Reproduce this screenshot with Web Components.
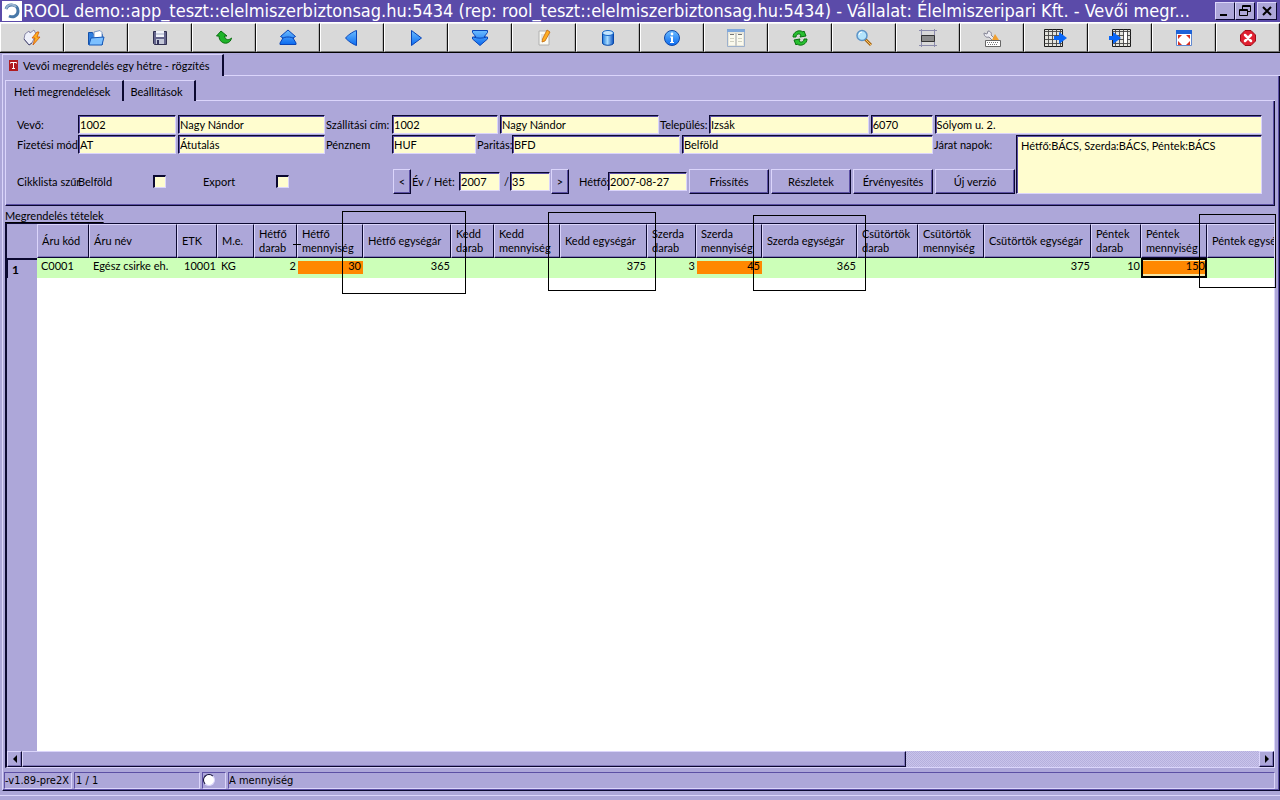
<!DOCTYPE html>
<html lang="hu">
<head>
<meta charset="utf-8">
<title>ROOL</title>
<style>
:root{
  --face:#ada7d9; --light:#dbd5fb; --dark:#0b0830; --mid:#5c50a4; --soft:#7f76b8; --paper:#fffdcf;
  --ui:Lato,Roboto,"Liberation Sans",Arial,sans-serif;
}
html,body{height:100%;margin:0}
body{background:var(--face);font:11px/13px var(--ui);color:#000;overflow:hidden}
</style>
</head>
<body>
<rool-app></rool-app>
<script>
const esc = s => s.replace(/&/g,'&amp;').replace(/</g,'&lt;').replace(/"/g,'&quot;');

function define(name, css, html) {
  customElements.define(name, class extends HTMLElement {
    connectedCallback() {
      if (this.shadowRoot) return;
      this.attachShadow({mode:'open'}).innerHTML =
        '<style>*{box-sizing:border-box}' + css + '</style>' + (typeof html === 'function' ? html(this) : html);
    }
  });
}

const defs = `<defs>
<linearGradient id="b" x1="0" y1="0" x2="0" y2="1"><stop offset="0" stop-color="#6cbcff"/><stop offset="1" stop-color="#0a6af0"/></linearGradient>
<linearGradient id="c" x1="0" y1="0" x2="1" y2="0"><stop offset="0" stop-color="#1d78dc"/><stop offset=".45" stop-color="#a8dcff"/><stop offset="1" stop-color="#0a50c0"/></linearGradient></defs>`;
const tableGlyph = (x) => `<g fill="none" stroke="#1b1b1b"><path fill="#e4e4de" d="M${x}.5 -.5h18v17h-18z"/><path d="M${x}.5 1.500h18M${x}.5 5.500h18M${x}.5 9.500h18M${x}.5 13.500h18M${x+3}.5 -.5v17M${x+7}.5 -.5v17M${x+11}.5 -.5v17M${x+15}.5 -.5v17" stroke="#444" stroke-width=".9"/></g>`;
const icons = {
  run:['Futtatás',`<path d="M1 4l4-3 1 2 4-3 2 4-4 9-3 2-5-6z" fill="#eef0fa" stroke="#8888a8"/><path d="M0 9l5 6 3-2" fill="none" stroke="#505078"/><path d="M13 2l-5 6h3l-2 7 7-8h-3l2-5z" fill="#ffb020" stroke="#d05808" stroke-width=".8"/>`],
  open:['Megnyitás',`<path d="M.5 2.500h4l1 2h9v10H.5z" fill="#2f7fe0" stroke="#1450a8"/><path d="M6 2l6-1.500 2 2V8H6z" fill="#fff" stroke="#7898c8"/><path d="M3 8l13-1-2 8H1z" fill="#7cc0ff" stroke="#1558b8"/>`],
  save:['Mentés',`<path d="M1.500 1.500h13v13h-12l-1-1z" fill="#65658c" stroke="#303050"/><path d="M4 1h8v6H4z" fill="#f2f4fa"/><path d="M4 9h8v5H4z" fill="#c4c8d8"/><path d="M5 10h2v4H5z" fill="#34345c"/><path d="M4 4h8" stroke="#a0a8c0"/>`],
  undo:['Vissza',`<path d="M5 1L.5 6h2.500c0 5 4 8 8 7 2-.5 4-2 4.500-5-2 2-6 3-7-2h2.500z" fill="#1fb42a" stroke="#08700f"/>`],
  first:['Első',`<path d="M8 0l7.500 6.500-2.500 1.500 3 5v1.500H0V13l3-5L.5 6.500z" fill="url(#b)" stroke="#0845b8"/><path d="M2 8.500c3-2 9-2 12 0" fill="none" stroke="#0845b8"/>`],
  prev:['Előző',`<path d="M12.500 .5v15C8 14 3 10 1.500 8 3 6 8 2 12.500 .5z" fill="url(#b)" stroke="#0845b8" stroke-linejoin="round"/>`],
  next:['Következő',`<path d="M3.500 .5v15L13.500 8z" fill="url(#b)" stroke="#0845b8" stroke-linejoin="round"/>`],
  last:['Utolsó',`<path d="M.5 .5h15v2L12 7h3.500v2L8 15.500.5 9V7H4L.5 2.500z" fill="url(#b)" stroke="#0845b8"/><path d="M2 7c3 1.500 9 1.500 12 0" fill="none" stroke="#0845b8"/>`],
  edit:['Szerkesztés',`<path d="M3 1h10v14H3z" fill="#fbfbf4" stroke="#b0b0b0"/><path d="M5 5h5M5 7h4M5 9h4" stroke="#ccc"/><path d="M11 0l3 2-5 9-3 1 .5-3z" fill="#ffae20" stroke="#c06810" stroke-width=".8"/>`],
  data:['Adatbázis',`<path d="M2.500 3v10c0 3 11 3 11 0V3z" fill="url(#c)" stroke="#0848a8"/><ellipse cx="8" cy="3" rx="5.500" ry="2.500" fill="#c4e6ff" stroke="#1768c8"/>`],
  info:['Információ',`<circle cx="8" cy="8" r="7.500" fill="url(#b)" stroke="#1048a8"/><circle cx="8" cy="4" r="1.400" fill="#fff"/><path d="M6 6.500h3V12h1v1H6v-1h1V7.500H6z" fill="#fff"/>`],
  list:['Lista',`<path d="M-.5 -.5h17v17h-17z" fill="#e8e6da" stroke="#9cb0cc"/><path d="M-1 -1h18v3H-1z" fill="#7fa8dc"/><path d="M1 4h6v11H1zM9 4h6v11H9z" fill="#fbfaee"/><path d="M2 4.500h4M10 4.500h4" stroke="#777"/><path d="M2 8.500h4M10 8.500h4M2 11.500h4M10 11.500h4" stroke="#d0d0c0"/><path d="M8 3v13" stroke="#b0b4b8"/>`],
  sync:['Frissítés',`<path d="M1 7c0-5 6-8 10-5l1-1 2 5-6 1 1-2C7 3 4 4 4 7z" fill="#28c030" stroke="#087010"/><path d="M15 9c0 5-6 8-10 5l-1 1-2-5 6-1-1 2c2 2 5 1 5-2z" fill="#28c030" stroke="#087010"/>`],
  find:['Keresés',`<path d="M9 9l6 6" stroke="#a86818" stroke-width="3"/><path d="M10 10l5 5" stroke="#ffc860"/><circle cx="6" cy="5.500" r="5" fill="#b4e4fc" stroke="#5c94c8" stroke-width="1.500"/><path d="M3 5a3 3 0 013-3" stroke="#fff" fill="none"/>`],
  frame:['Keret',`<path d="M1.500 -1v18M14.500 -1v18M-1 .5h18M-1 15.500h18" stroke="#8c8cac"/><path d="M1.500 5.500h13v6h-13z" fill="#8c8c8c" stroke="#333"/>`],
  tools:['Eszközök',`<path d="M0 3l3 1 1-3c3 0 4 3 3 4l5 5-2 2-5-5C2 8 0 6 0 3z" fill="#ececf2" stroke="#888898"/><path d="M11 4l-3 6h7z" fill="#f0a030"/><path d="M1.500 10.500h15v6h-15z" fill="#fff" stroke="#666"/><path d="M3 12.500h12M4 14.500h10" stroke="#777" stroke-dasharray="1 1"/>`],
  exp:['Exportálás',tableGlyph(-3)+`<path d="M6 6h5V2l8 6-8 6v-4H6z" fill="#0866f8"/>`],
  imp:['Importálás',tableGlyph(0)+`<path d="M12 2h3v11h-3z" fill="#fff"/><path d="M-3 6h4V2l8 6-8 6v-4h-4z" fill="#0866f8"/>`],
  full:['Teljes képernyő',`<path d="M.5 .5h15v15H.5z" fill="#fff" stroke="#6088d0"/><path d="M0 0h16v4H0z" fill="#1c62d8"/><path d="M2 5h4L2 9zM14 5v4l-4-4zM2 15v-4l4 4zM14 15h-4l4-4z" fill="#d83020"/>`],
  quit:['Kilépés',`<path d="M5 .5h6L15.500 5v6L11 15.500H5L.5 11V5z" fill="#e02030" stroke="#a00c18"/><path d="M5 5l6 6M11 5l-6 6" stroke="#fff" stroke-width="2.500" stroke-linecap="round"/>`]
};

define('rool-titlebar', `
:host{display:flex;align-items:center;height:22px;padding:0 3px 0 2px;background:#5b4ba9;color:#fff;
 font:18px/22px "DejaVu Sans Condensed","DejaVu Sans",sans-serif}
svg{display:block;flex:none}
.logo{background:#fff;width:20px;height:20px}
h1{flex:1;min-width:0;margin:0 0 0 1px;font:inherit;white-space:nowrap;overflow:hidden}
button{flex:none;width:20px;height:18px;padding:0;background:var(--face);border:1px solid;border-color:var(--light) var(--dark) var(--dark) var(--light);display:grid;place-items:center}
button:last-child{margin-left:2px}`, `
<svg class="logo" viewBox="0 0 20 20"><path d="M4 8c2-6 12-5 12 2 0 5-5 7-9 5" fill="none" stroke="#4878a8" stroke-width="3"/><path d="M4 8c2-6 8-5 10-2" fill="none" stroke="#9ab4d0" stroke-width="2"/></svg>
<h1><slot></slot></h1>
<button aria-label="Kis méret"><svg width="12" height="12"><path d="M1 10h7" stroke="#000" stroke-width="2"/></svg></button>
<button aria-label="Visszaállítás"><svg width="12" height="12" fill="none" stroke="#000"><path d="M3.500 4V.5h8v6H9M3 1.500h9M.5 4.500h8v6h-8zM0 5.500h9"/></svg></button>
<button aria-label="Bezárás"><svg width="12" height="12"><path d="M2 2l8 8M10 2l-8 8" stroke="#000" stroke-width="2"/></svg></button>`);

define('rool-toolbar', `
:host{display:flex;height:31px;background:#d9d9d9;border-top:1px solid #fff;border-bottom:1px solid #000}
button{flex:1 1 0;min-width:0;margin:0;padding:0;background:#d9d9d9;border:1px solid;border-color:#f6f6f6 #111 #777 #fff;box-shadow:inset -1px 0 #b4b4b4;display:grid;place-items:center}
svg{display:block;overflow:visible}`,
  () => Object.values(icons).map(([t,p]) => `<button aria-label="${t}"><svg width="16" height="16" viewBox="0 0 16 16">${defs}${p}</svg></button>`).join(''));

define('rool-tab', `
:host{display:block}
button{display:flex;align-items:center;gap:5px;height:22px;padding:0 12px 0 6px;margin:0;background:var(--face);font:inherit;color:inherit;
 border:solid;border-width:1px 2px 0 1px;border-color:var(--light) var(--dark) transparent var(--light);white-space:nowrap}
:host([sub]) button{padding:0 12px 0 8px;height:21px}
:host([sub]:not([active])) button{border-left:0;padding:0 11px 0 6px}`,
  () => `<button role="tab"><slot name="icon"></slot><slot></slot></button>`);

define('rool-field', `
:host{display:flex;align-items:center;min-width:0}
label{flex:none;white-space:nowrap}
input{flex:1 1 0;min-width:0;height:19px;margin:0;padding:0 0 0 1px;background:var(--paper);font:inherit;color:inherit;border-radius:0;outline:0;
 border:1px solid;border-color:var(--dark) var(--light) var(--light) var(--dark);box-shadow:inset 1px 1px var(--mid)}
input+input{margin-left:2px}`, el => {
    const parts = el.getAttribute('values').split('|').map(v => v.split('@'));
    const label = el.getAttribute('label');
    return `<label for="f0" style="width:${el.getAttribute('lw')}px">${esc(label)}</label>` +
      parts.map(([v,w],i) => `<input id="f${i}" value="${esc(v)}" style="flex:${w} 1 ${w}px"${i?` aria-label="${esc(label)} ${i+1}"`:''}>`).join('');
  });

define('rool-button', `
:host{display:block}
button{display:block;width:100%;height:25px;padding:0;background:var(--face);font:inherit;color:inherit;border-radius:0;
 border:1px solid;border-color:var(--light) var(--dark) var(--dark) var(--light);box-shadow:inset -1px -1px var(--mid)}`,
  `<button><slot></slot></button>`);

define('rool-check', `
:host{display:flex;align-items:center;justify-content:space-between}
input{appearance:none;width:13px;height:13px;margin:0;background:var(--paper);border:solid;border-width:2px 1px 1px 2px;border-color:var(--dark) var(--light) var(--light) var(--dark)}`,
  el => `<label for="c">${esc(el.getAttribute('label'))}</label><input id="c" type="checkbox">`);

define('rool-form', `
:host{display:flex;flex-direction:column;gap:1px;padding:14px 12px 11px 11px;height:105px;
 border:1px solid;border-color:var(--light) var(--dark) var(--dark) var(--light);box-shadow:inset -1px -1px var(--mid)}
.row{display:flex;align-items:center}
.lower{display:flex}
.stack{flex:none;width:999px;display:flex;flex-direction:column}
.top{gap:1px}
.third{margin-top:15px}
.cut{width:61px;white-space:nowrap}
.memo{flex:1;min-width:0;height:59px;resize:none;padding:3px 4px;margin:0;background:var(--paper);font:inherit;color:inherit;border-radius:0;
 border:1px solid;border-color:var(--dark) var(--light) var(--light) var(--dark);box-shadow:inset 1px 1px var(--mid)}`, `
<div class="row top">
 <rool-field style="width:308px" label="Vevő:" lw="61" values="1002@98|Nagy Nándor@147"></rool-field>
 <rool-field style="width:333px" label="Szállítási cím:" lw="66" values="1002@106|Nagy Nándor@159"></rool-field>
 <rool-field style="flex:1" label="Település:" lw="49" values="Izsák@160|6070@62|Sólyom u. 2.@328"></rool-field>
</div>
<div class="lower">
 <div class="stack">
  <div class="row top">
   <rool-field style="width:308px" label="Fizetési mód:" lw="61" values="AT@98|Átutalás@147"></rool-field>
   <rool-field style="width:150px" label="Pénznem" lw="66" values="HUF@84"></rool-field>
   <rool-field style="width:456px" label="Paritás:" lw="35" values="BFD@168|Belföld@251"></rool-field>
   <label for="memo">Járat napok:</label>
  </div>
  <div class="row third">
   <span class="cut">Cikklista szűr</span>
   <rool-check style="width:88px" label="Belföld"></rool-check>
   <rool-check style="width:86px;margin-left:37px" label="Export"></rool-check>
   <rool-button style="width:18px;margin-left:104px">&lt;</rool-button>
   <rool-field style="width:88px;margin-left:1px" label="Év / Hét:" lw="47" values="2007@40"></rool-field>
   <rool-field style="width:46px;margin-left:4px" label="/" lw="6" values="35@40"></rool-field>
   <rool-button style="width:18px;margin-left:1px">&gt;</rool-button>
   <rool-field style="width:108px;margin-left:10px" label="Hétfő:" lw="29" values="2007-08-27@79"></rool-field>
   <rool-button style="width:80px;margin-left:2px">Frissítés</rool-button>
   <rool-button style="width:80px;margin-left:2px">Részletek</rool-button>
   <rool-button style="width:80px;margin-left:2px">Érvényesítés</rool-button>
   <rool-button style="width:80px;margin-left:2px">Új verzió</rool-button>
  </div>
 </div>
 <textarea class="memo" id="memo">Hétfő:BÁCS, Szerda:BÁCS, Péntek:BÁCS</textarea>
</div>`);

const columns = [
  [52,'Áru kód','C0001'],[88,'Áru név','Egész csirke eh.'],[40,'ETK','10001','r'],[37,'M.e.','KG'],
  [43,'Hétfő darab','2','r'],[66,'Hétfő mennyiség','30','r hot'],[88,'Hétfő egységár','365','r'],
  [43,'Kedd darab','','r'],[66,'Kedd mennyiség','','r'],[87,'Kedd egységár','375','r'],
  [49,'Szerda darab','3','r'],[66,'Szerda mennyiség','45','r hot'],[95,'Szerda egységár','365','r'],
  [61,'Csütörtök darab','','r'],[66,'Csütörtök mennyiség','','r'],[107,'Csütörtök egységár','375','r'],
  [50,'Péntek darab','10','r'],[66,'Péntek mennyiség','150','r hot sel'],[88,'Péntek egységár','','r']
];
define('rool-grid', `
:host{display:flex;flex-direction:column;position:relative;border:solid;border-width:1px 1px 1px 2px;border-color:var(--dark) var(--light) var(--light) var(--dark)}
.view{flex:1;min-height:0;overflow:hidden;background:linear-gradient(90deg,var(--face) 30px,#fff 30px)}
table{table-layout:fixed;border-collapse:separate;border-spacing:0;width:1288px}
th,td{padding:0;font-weight:400;overflow:hidden;white-space:nowrap}
thead th{height:34px;padding:0 0 0 4px;text-align:left;line-height:14px;background:var(--face);border:1px solid;border-color:var(--light) var(--dark) var(--dark) var(--light);box-shadow:inset 0 -1px var(--soft)}
thead th:first-child{border-color:transparent;box-shadow:none}
tbody th{height:20px;font-weight:700;font-size:12px;text-align:left;padding-left:4px;background:var(--face);border:solid;border-width:2px 0 0 1px;border-color:var(--dark)}
td{height:20px;background:#ccffb8;padding:1px 1px 0 4px;vertical-align:top}
td.r{text-align:right}
td.hot{padding-right:2px;background:linear-gradient(#ff8800,#ff8800) 1px 3px/100% 13px no-repeat #ccffb8}
td.sel{background:linear-gradient(#ff8800,#ff8800) 0 3px/100% 13px no-repeat #f6e8a8;box-shadow:inset 0 0 0 2px #000}
.bar{flex:none;display:flex;height:16px;background:repeating-conic-gradient(#c9c4ea 0 25%,#b5afde 0 50%) 0 0/2px 2px}
.bar button,.thumb{background:var(--face);border:1px solid;border-color:var(--light) var(--dark) var(--dark) var(--light);box-shadow:inset -1px -1px var(--soft)}
.bar button{width:15px;padding:0;display:grid;place-items:center;border-radius:0}
.track{flex:1}.thumb{width:71.500%;height:16px}
.mark{position:absolute;border:1px solid #000;pointer-events:none}`, `
<div class="view"><table><colgroup><col style="width:30px">${columns.map(c=>`<col style="width:${c[0]}px">`).join('')}</colgroup>
<thead><tr><th></th>${columns.map(c=>`<th scope="col">${/ (darab|mennyiség)/.test(c[1])?c[1].replace(' ','<br>'):c[1]}</th>`).join('')}</tr></thead>
<tbody><tr><th scope="row">1</th>${columns.map(c=>`<td class="${c[3]||''}">${c[2]}</td>`).join('')}</tr></tbody></table></div>
<div class="bar"><button aria-label="Balra"><svg width="6" height="8"><path d="M5 0v8L1 4z"/></svg></button>
<div class="track"><div class="thumb"></div></div>
<button aria-label="Jobbra"><svg width="6" height="8"><path d="M1 0v8l4-4z"/></svg></button></div>
<div class="mark" style="left:335px;top:-13px;width:124px;height:83px"></div>
<div class="mark" style="left:541px;top:-12px;width:108px;height:79px"></div>
<div class="mark" style="left:746px;top:-9px;width:113px;height:76px"></div>
<div class="mark" style="right:-2px;top:-10px;width:77px;height:74px"></div>
<div class="mark" style="left:286px;top:20px;width:8px;height:1px;border-width:1px 0 0"></div>`);

define('rool-status', `
:host{display:flex;gap:2px;height:17px;font:11px/15px "DejaVu Sans Condensed","Noto Sans",sans-serif}
div{border:1px solid;border-color:var(--mid) var(--light) var(--light) var(--mid);white-space:nowrap;overflow:hidden}
.v{width:68px}.n{width:126px;padding-left:1px}.r{width:24px}.m{flex:1}
input{appearance:none;display:block;width:12px;height:12px;margin:1px 0 0 0;border-radius:50%;background:#fff;border:1px solid;border-color:var(--dark) var(--light) var(--light) var(--dark)}`, `
<div class="v">-v1.89-pre2X</div><div class="n">1 / 1</div><div class="r"><input type="radio" aria-label="Állapot"></div><div class="m">A mennyiség</div>`);

define('rool-app', `
:host{display:flex;flex-direction:column;height:100vh;background:var(--face);cursor:default}
rool-titlebar,rool-toolbar{flex:none}
.tabs{display:flex;flex:none;align-items:flex-end}
.outer{margin:1px 0 0 2px}
.fill{flex:1;align-self:flex-end;height:1px;background:var(--light)}
.panel{flex:1;min-height:0;display:flex;flex-direction:column;margin-left:2px;padding:4px 4px 0 2px;border:solid;border-width:0 1px 1px 1px;border-color:var(--dark) var(--dark) var(--dark) var(--light);box-shadow:inset -1px -1px var(--mid)}
rool-form{flex:none;border-top:0}
h2{margin:2px 0 0;font:inherit;line-height:15px;text-decoration:underline;text-underline-offset:2px}
rool-grid{flex:1;min-height:0}
rool-status{flex:none;margin:4px 0 1px -1px}
.foot{flex:none;height:9px}
.foot i{display:block;margin-top:4px;border-top:1px solid var(--light)}`, `
<rool-titlebar>ROOL demo::app_teszt::elelmiszerbiztonsag.hu:5434 (rep: rool_teszt::elelmiszerbiztonsag.hu:5434) - Vállalat: Élelmiszeripari Kft. - Vevői megr...</rool-titlebar>
<rool-toolbar></rool-toolbar>
<div class="tabs outer"><rool-tab active><svg slot="icon" width="9" height="11" viewBox="0 0 9 11"><path d="M0 0h9v11H0z" fill="#b01c20"/><path d="M1.500 3.500V2.500h6v1M4.500 3v6M3 8.500h3" fill="none" stroke="#fff"/></svg>Vevői megrendelés egy hétre - rögzítés</rool-tab><span class="fill"></span></div>
<div class="panel">
 <div class="tabs"><rool-tab sub active>Heti megrendelések</rool-tab><rool-tab sub>Beállítások</rool-tab><span class="fill"></span></div>
 <rool-form></rool-form>
 <h2>Megrendelés tételek</h2>
 <rool-grid></rool-grid>
 <rool-status></rool-status>
</div>
<div class="foot"><i></i></div>`);
</script>
</body>
</html>
